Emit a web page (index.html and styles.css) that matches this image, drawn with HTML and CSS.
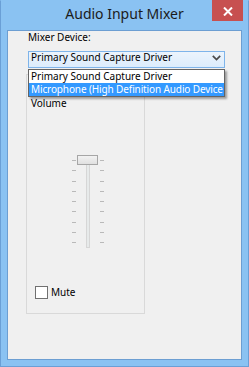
FILE: index.html
```html
<!DOCTYPE html>
<html>
<head>
<meta charset="utf-8">
<link rel="stylesheet" href="styles.css">
</head>
<body>
<div class="window">
  <div class="titlebar">
    <span class="title">Audio Input Mixer</span>
    <div class="close">
      <svg width="10" height="9" viewBox="0 0 10 9"><path d="M1 0.5 L9 8.5 M9 0.5 L1 8.5" stroke="#fff" stroke-width="2" fill="none"/></svg>
    </div>
  </div>
  <div class="client">
    <div class="label">Mixer Device:</div>
    <div class="combo">
      <span class="combo-text">Primary Sound Capture Driver</span>
      <svg class="chev" width="9" height="6" viewBox="0 0 9 6"><path d="M0.8 0.8 L4.5 4.6 L8.2 0.8" stroke="#4a4a4a" stroke-width="1.7" fill="none"/></svg>
    </div>
    <ul class="droplist">
      <li class="item">Primary Sound Capture Driver</li>
      <li class="item sel tight">Microphone (High Definition Audio Device</li>
    </ul>
    <div class="group">
      <div class="vol-label">Volume</div>
      <div class="slider">
        <div class="ticks">
          <i></i><i></i><i></i><i></i><i></i><i></i><i></i><i></i><i></i>
        </div>
        <div class="rail">
          <div class="track"></div>
          <div class="thumb"></div>
        </div>
        <div class="ticks right">
          <i></i><i></i><i></i><i></i><i></i><i></i><i></i><i></i><i></i>
        </div>
      </div>
      <label class="check"><span class="box"></span><span>Mute</span></label>
    </div>
  </div>
</div>
</body>
</html>
```
FILE: styles.css
```css
* { box-sizing: border-box; }
html, body { margin: 0; padding: 0; }
body {
  font-family: "Noto Sans", "DejaVu Sans", sans-serif;
  font-size: 10px;
  color: #000;
  background: #8ac2f2;
}
.window {
  width: 249px;
  height: 367px;
  background: #8ac2f2;
  border: 1px solid #6a9fd6;
  border-top-color: #8ac2f2;
  display: flex;
  flex-direction: column;
}
.titlebar {
  position: relative;
  height: 29px;
  display: flex;
  justify-content: center;
  margin: 0 -1px;
}
.title {
  font-size: 14px;
  line-height: 16px;
  margin-top: 5px;
  color: #1b1b1b;
}
.close {
  position: absolute;
  right: 6px;
  top: -1px;
  width: 31px;
  height: 21px;
  background: #c75050;
  display: flex;
  align-items: center;
  justify-content: center;
}
.close svg { display: block; margin-top: 1px; }
.client {
  position: relative;
  margin: 0 6px 6px;
  flex: 1;
  background: #f0f0f0;
  border: 1px solid #6c9ed2;
}
.label {
  margin-left: 20px;
  line-height: 12px;
  height: 12px;
}
.combo {
  margin: 8px 0 0 20px;
  width: 197px;
  height: 17px;
  border: 1px solid #7eb4ea;
  background: linear-gradient(#ecf4fc, #dcecfc);
  display: flex;
  align-items: flex-start;
  padding-left: 2px;
}
.combo-text { line-height: 11px; margin-top: 0; }
.chev { margin: 3px 3px 0 auto; display: block; }
.droplist {
  position: absolute;
  left: 20px;
  top: 38px;
  width: 197px;
  margin: 0;
  padding: 0;
  list-style: none;
  background: #fff;
  border: 1px solid #646464;
  box-shadow: 2px 2px 2px rgba(0,0,0,0.35);
  z-index: 2;
  overflow: hidden;
}
.item {
  height: 13px;
  line-height: 13px;
  padding-left: 2px;
  white-space: nowrap;
  overflow: hidden;
}
.item.tight { letter-spacing: -0.12px; }
.item.sel { background: #3399ff; color: #fff; }
.group {
  margin: 6px 0 0 18px;
  width: 119px;
  height: 240px;
  border: 1px solid #d9d9d9;
  display: flex;
  flex-direction: column;
}
.vol-label {
  margin: 22px 0 0 4px;
  line-height: 12px;
}
.slider {
  margin: 46px 0 0 45px;
  display: flex;
  height: 94px;
}
.ticks {
  width: 4px;
  height: 83px;
  margin-top: 5px;
  display: flex;
  flex-direction: column;
  justify-content: space-between;
}
.ticks i {
  display: block;
  height: 1px;
  background: #b9b9b9;
}
.ticks.right { margin-left: 2px; }
.rail {
  position: relative;
  width: 21px;
  margin-left: 1px;
}
.track {
  position: absolute;
  left: 9px;
  top: 5px;
  width: 4px;
  height: 88px;
  border: 1px solid #d6d6d6;
  background: #e7eaea;
}
.thumb {
  position: relative;
  width: 21px;
  height: 10px;
  border: 1px solid #a6a6a6;
  background: linear-gradient(#f2f2f2, #e0e0e0);
}
.check {
  margin: 37px 0 0 8px;
  display: flex;
  align-items: center;
  line-height: 13px;
}
.box {
  width: 13px;
  height: 13px;
  border: 1px solid #707070;
  background: #fff;
  margin-right: 3px;
}
```
